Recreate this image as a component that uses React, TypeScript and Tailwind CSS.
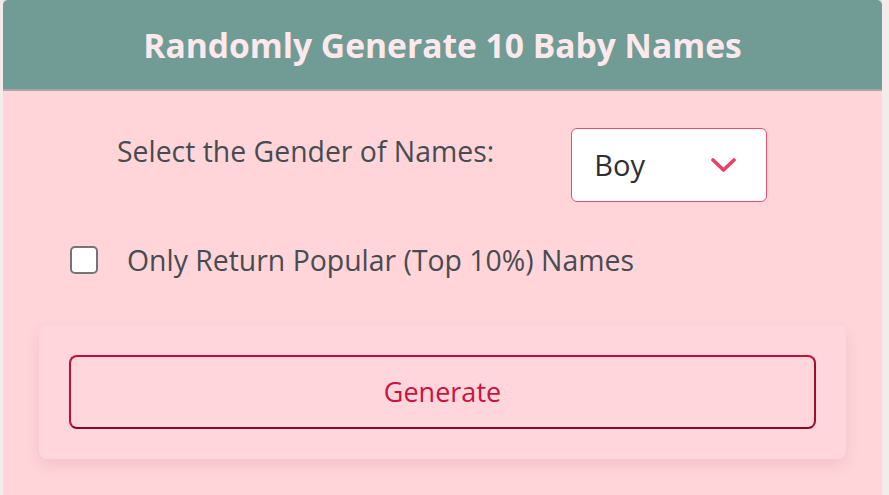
export default function App() {
  return (
    <div className="min-h-[495px] w-full bg-[#f3ecea] pl-[3px] pr-[7px] font-['Open_Sans',sans-serif]">
      <div className="min-h-[495px] w-full bg-[#ffd5da]">
        <header className="flex h-[91px] items-center justify-center rounded-t-[5px] border-b-2 border-[#a6a6a6] bg-[#719c96] pt-[1px]">
          <h1 className="text-[33.6px] font-bold text-[#fde9ec]">Randomly Generate 10 Baby Names</h1>
        </header>

        <div className="flex items-start pl-[114px] pt-[37px]">
          <label className="pt-[4px] text-[28.4px] leading-[1.4] text-[#484b50]">Select the Gender of Names:</label>
          <div className="ml-[77px] flex h-[74px] w-[196px] items-center justify-between rounded-[6px] border border-[#ea4d6d] bg-white pl-[22px] pr-[30px]">
            <span className="text-[29px] text-[#2f3033]">Boy</span>
            <svg width="25" height="14" viewBox="0 0 25 14" fill="none" className="mb-[1px]">
              <polyline points="2,2 12.5,12 23,2" stroke="#ea4264" strokeWidth="3.6" strokeLinecap="round" strokeLinejoin="round" />
            </svg>
          </div>
        </div>

        <div className="mt-[44px] flex h-[28px] items-center pl-[67px]">
          <span className="h-[28px] w-[28px] rounded-[5px] border-2 border-[#747474] bg-white" />
          <span className="ml-[29px] text-[28.4px] leading-none text-[#484b50]">Only Return Popular (Top 10%) Names</span>
        </div>

        <div className="mx-[36px] mt-[51px] rounded-[8px] bg-[#ffd6db] p-[30px] shadow-[0_6px_14px_rgba(150,60,80,0.12)]">
          <button className="flex h-[74px] w-full items-center justify-center rounded-[8px] border-[2.5px] border-[#c10f39] border-b-[#850a26] border-r-[#a50c30] text-[27px] text-[#cc1240]">
            Generate
          </button>
        </div>
      </div>
    </div>
  );
}
